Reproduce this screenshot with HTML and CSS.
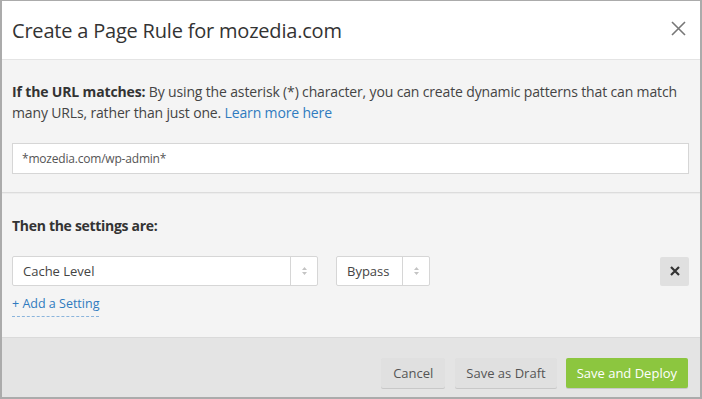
FILE: index.html
```html
<!DOCTYPE html>
<html lang="en">
<head>
    <meta charset="UTF-8">
    <meta name="viewport" content="width=device-width, initial-scale=1.0">
    <title>Create a Page Rule</title>
    <link rel="stylesheet" href="styles.css">
</head>
<body>
    <div class="modal">
        <div class="modal-header">
            <h1>Create a Page Rule for mozedia.com</h1>
            <svg class="close" width="15" height="15" viewBox="0 0 15 15">
                <path d="M1 1 L14 14 M14 1 L1 14" stroke="#777" stroke-width="1.6" fill="none"/>
            </svg>
        </div>

        <div class="section url-section">
            <p class="intro"><b>If the URL matches:</b> By using the asterisk (*) character, you can create dynamic patterns that can match many URLs, rather than just one. <a href="#">Learn more here</a></p>
            <div class="url-input">*mozedia.com/wp-admin*</div>
        </div>

        <div class="section settings-section">
            <p class="label">Then the settings are:</p>
            <div class="setting-row">
                <div class="select select-wide">
                    <span class="select-text">Cache Level</span>
                    <span class="arrows">
                        <svg width="7" height="10" viewBox="0 0 7 10">
                            <path d="M3.5 1 L6 4 L1 4 Z M3.5 9 L6 6 L1 6 Z" fill="#c4c4c4"/>
                        </svg>
                    </span>
                </div>
                <div class="select select-small">
                    <span class="select-text">Bypass</span>
                    <span class="arrows">
                        <svg width="7" height="10" viewBox="0 0 7 10">
                            <path d="M3.5 1 L6 4 L1 4 Z M3.5 9 L6 6 L1 6 Z" fill="#c4c4c4"/>
                        </svg>
                    </span>
                </div>
                <span class="remove">
                    <svg width="10" height="10" viewBox="0 0 10 10">
                        <path d="M1 1 L9 9 M9 1 L1 9" stroke="#333" stroke-width="2.2" fill="none"/>
                    </svg>
                </span>
            </div>
            <a href="#" class="add-setting">+ Add a Setting</a>
        </div>

        <div class="modal-footer">
            <button class="btn btn-cancel">Cancel</button>
            <button class="btn btn-draft">Save as Draft</button>
            <button class="btn btn-green">Save and Deploy</button>
        </div>
    </div>
</body>
</html>
```

FILE: styles.css
```css
body {
    margin: 0;
    font-family: 'Open Sans', sans-serif;
    color: #333;
}

.modal {
    width: 702px;
    height: 399px;
    box-sizing: border-box;
    border: 2px solid #ababab;
    border-top-width: 1px;
    display: flex;
    flex-direction: column;
    background-color: #f4f4f4;
}

.modal-header {
    height: 58px;
    background-color: #fff;
    border-bottom: 1px solid #e4e4e4;
    display: flex;
    align-items: center;
    justify-content: space-between;
    padding: 0 14px 0 10px;
}

h1 {
    margin: 0;
    font-size: 20px;
    font-weight: normal;
    color: #333;
    letter-spacing: -0.2px;
}

.close {
    margin-top: -4px;
}

.section {
    padding: 0 11px 0 10px;
}

.url-section {
    padding-top: 21px;
    height: 111px;
    border-bottom: 1px solid #dcdcdc;
}

.intro {
    margin: 0 0 20px 0;
    font-size: 14px;
    line-height: 21px;
    letter-spacing: -0.15px;
    color: #444;
}

.intro b {
    color: #333;
}

.intro a {
    color: #2f7bbf;
    text-decoration: none;
}

.url-input {
    height: 29px;
    line-height: 29px;
    background-color: #fff;
    border: 1px solid #d6d6d6;
    padding: 0 9px;
    font-size: 12px;
    color: #555;
    letter-spacing: -0.2px;
}

.settings-section {
    flex: 1;
    padding-top: 22px;
    border-top: 1px solid #ececec;
    border-bottom: 1px solid #dadada;
}

.label {
    margin: 0 0 21px 0;
    font-size: 14px;
    font-weight: bold;
    color: #333;
    letter-spacing: -0.3px;
}

.setting-row {
    display: flex;
    align-items: center;
}

.select {
    display: flex;
    height: 28px;
    background-color: #fff;
    border: 1px solid #d6d6d6;
    border-radius: 2px;
    font-size: 13px;
    color: #444;
}

.select-text {
    flex: 1;
    line-height: 28px;
    padding-left: 10px;
}

.arrows {
    width: 26px;
    border-left: 1px solid #d6d6d6;
    display: flex;
    align-items: center;
    justify-content: center;
}

.select-wide {
    width: 304px;
}

.select-small {
    width: 92px;
    margin-left: 18px;
}

.remove {
    margin-left: auto;
    width: 29px;
    height: 29px;
    display: flex;
    align-items: center;
    justify-content: center;
    background-color: #e0e0e0;
    border-radius: 2px;
}

.add-setting {
    display: inline-block;
    margin-top: 9px;
    font-size: 12.5px;
    color: #2f7bbf;
    text-decoration: none;
    border-bottom: 1px dashed #8ab4dc;
    padding-bottom: 4px;
}

.modal-footer {
    height: 59px;
    background-color: #e4e4e4;
    display: flex;
    justify-content: flex-end;
    align-items: flex-start;
    padding: 20px 12px 0 0;
    box-sizing: border-box;
}

.btn {
    font-family: 'Open Sans', sans-serif;
    font-size: 13px;
    height: 30px;
    padding: 0 12px;
    margin-left: 10px;
    border: none;
    border-radius: 2px;
    background-color: #e0e0e0;
    color: #555;
    box-shadow: 0 1px 0 #c8c8c8;
}

.btn-draft {
    padding: 0 11px;
}

.btn-green {
    background-color: #8cc63f;
    color: #fff;
    padding: 0 11px;
    margin-left: 9px;
}
```
